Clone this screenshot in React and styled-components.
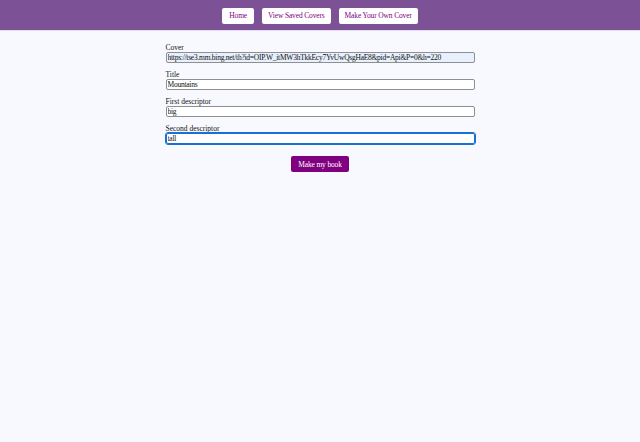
import styled, { createGlobalStyle } from 'styled-components';

const colors = {
  page: '#f8f9fe',
  header: '#7d5196',
  purple: '#800080',
  border: '#8f8f8f',
  autofill: '#e8f0fe',
  focus: '#1a6fd6',
};

const GlobalStyle = createGlobalStyle`
  html, body {
    margin: 0;
    padding: 0;
    background: ${colors.page};
    font-family: "Liberation Serif", "DejaVu Serif", serif;
  }
`;

const Page = styled.div`
  min-height: 442px;
  background: ${colors.page};
`;

const Header = styled.header`
  height: 31px;
  background: ${colors.header};
  border-bottom: 1px solid #e6dcef;
  display: flex;
  justify-content: center;
  align-items: center;
  gap: 8px;
  box-sizing: border-box;
  padding-top: 1px;
`;

const NavButton = styled.button`
  height: 16px;
  padding: 0 ${props => props.$pad || 6}px;
  border: none;
  border-radius: 2px;
  background: #ffffff;
  color: ${colors.purple};
  font-family: inherit;
  font-size: 7.5px;
  letter-spacing: -0.15px;
  cursor: pointer;
`;

const Form = styled.form`
  width: 309px;
  margin: 12px auto 0;
  display: flex;
  flex-direction: column;
  align-items: stretch;
`;

const Field = styled.div`
  display: flex;
  flex-direction: column;
  margin-bottom: 7px;
`;

const Label = styled.label`
  font-size: 7.5px;
  color: #111;
  line-height: 9px;
`;

const Input = styled.input`
  box-sizing: border-box;
  height: 11px;
  margin: 0;
  padding: 0 1px;
  font-family: inherit;
  font-size: 7.5px;
  letter-spacing: -0.25px;
  color: #111;
  background: ${props => (props.$filled ? colors.autofill : '#fff')};
  border: 1px solid ${props => (props.$focused ? colors.focus : colors.border)};
  border-radius: 2px;
  outline: ${props => (props.$focused ? `1px solid ${colors.focus}` : 'none')};
`;

const SubmitButton = styled.button`
  align-self: center;
  margin-top: 5px;
  height: 16px;
  padding: 0 7px;
  border: none;
  border-radius: 2px;
  background: ${colors.purple};
  color: #fff;
  font-family: inherit;
  font-size: 7.5px;
  letter-spacing: -0.15px;
  cursor: pointer;
`;

const fields = [
  { id: 'cover', label: 'Cover', value: 'https://tse3.mm.bing.net/th?id=OIP.W_itMW3hTkkEcy7YvUwQsgHaE8&pid=Api&P=0&h=220', filled: true },
  { id: 'title', label: 'Title', value: 'Mountains' },
  { id: 'desc1', label: 'First descriptor', value: 'big' },
  { id: 'desc2', label: 'Second descriptor', value: 'tall', focused: true },
];

export default function App() {
  return (
    <Page>
      <GlobalStyle />
      <Header>
        <NavButton $pad={7}>Home</NavButton>
        <NavButton>View Saved Covers</NavButton>
        <NavButton>Make Your Own Cover</NavButton>
      </Header>
      <Form onSubmit={e => e.preventDefault()}>
        {fields.map(f => (
          <Field key={f.id}>
            <Label htmlFor={f.id}>{f.label}</Label>
            <Input id={f.id} defaultValue={f.value} $filled={f.filled} $focused={f.focused} />
          </Field>
        ))}
        <SubmitButton type="submit">Make my book</SubmitButton>
      </Form>
    </Page>
  );
}
